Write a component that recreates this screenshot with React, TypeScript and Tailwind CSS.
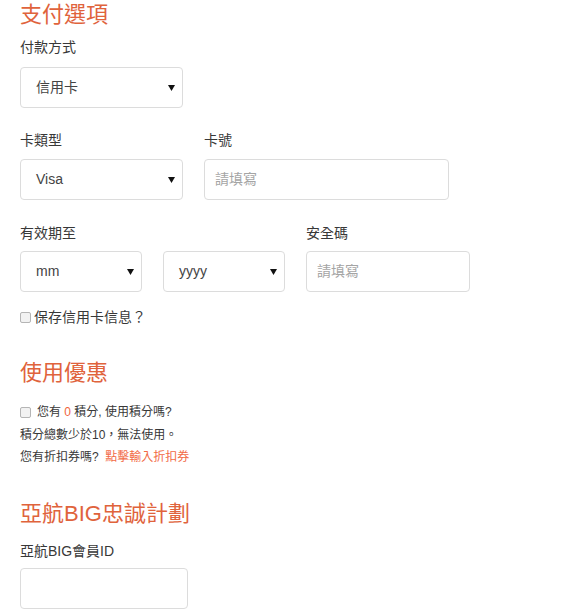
import React from "react"

const font = { fontFamily: '"Liberation Sans", "Noto Sans CJK TC", sans-serif' }

function Caret() {
    return (
        <svg width="7" height="6" viewBox="0 0 7 6" className="shrink-0">
            <polygon points="0,0 7,0 3.5,6" fill="#111" />
        </svg>
    )
}

function FakeSelect({ value, width }: { value: string; width: string }) {
    return (
        <div
            className={`${width} h-[41px] flex items-center justify-between pl-[15px] pr-[7px] border border-[#dcdcdc] rounded-[4px] bg-white text-[14px] text-[#444]`}
        >
            <span>{value}</span>
            <Caret />
        </div>
    )
}

function TextBox({ placeholder, width }: { placeholder?: string; width: string }) {
    return (
        <div
            className={`${width} h-[41px] flex items-center pl-[10px] border border-[#dcdcdc] rounded-[4px] bg-white text-[14px] text-[#a5a5a5]`}
        >
            {placeholder}
        </div>
    )
}

function Box() {
    return <span className="inline-block w-[11px] h-[11px] border border-[#b5b5b5] rounded-[2px] bg-[#f2f2f2] shrink-0" />
}

export default function App() {
    return (
        <div className="w-[586px] h-[614px] bg-white px-5 text-[#383838] overflow-hidden" style={font}>
            <h2 className="text-[22px] leading-[28px] text-[#e0633c] mt-[1px]">支付選項</h2>
            <div className="text-[14px] leading-[20px] mt-[8px]">付款方式</div>
            <div className="mt-[10px]">
                <FakeSelect value="信用卡" width="w-[163px]" />
            </div>

            <div className="flex gap-[21px] mt-[22px]">
                <div>
                    <div className="text-[14px] leading-[20px]">卡類型</div>
                    <div className="mt-[9px]">
                        <FakeSelect value="Visa" width="w-[163px]" />
                    </div>
                </div>
                <div>
                    <div className="text-[14px] leading-[20px]">卡號</div>
                    <div className="mt-[9px]">
                        <TextBox placeholder="請填寫" width="w-[245px]" />
                    </div>
                </div>
            </div>

            <div className="flex gap-[21px] mt-[23px]">
                <div>
                    <div className="text-[14px] leading-[20px]">有效期至</div>
                    <div className="mt-[8px] flex gap-[21px]">
                        <FakeSelect value="mm" width="w-[122px]" />
                        <FakeSelect value="yyyy" width="w-[122px]" />
                    </div>
                </div>
                <div>
                    <div className="text-[14px] leading-[20px]">安全碼</div>
                    <div className="mt-[8px]">
                        <TextBox placeholder="請填寫" width="w-[164px]" />
                    </div>
                </div>
            </div>

            <div className="flex items-center gap-[3px] mt-[15px] text-[14px] leading-[20px]">
                <Box />
                <span>保存信用卡信息？</span>
            </div>

            <h2 className="text-[22px] leading-[28px] text-[#e0633c] mt-[32px]">使用優惠</h2>
            <div className="mt-[14px] text-[12px] leading-[22px]">
                <div className="flex items-center gap-[6px]">
                    <Box />
                    <span>
                        您有 <span className="text-[#f0643c]">0</span> 積分, 使用積分嗎?
                    </span>
                </div>
                <div className="mt-[1px]">積分總數少於10，無法使用。</div>
                <div>
                    您有折扣券嗎?&nbsp; <span className="text-[#f26a45]">點擊輸入折扣券</span>
                </div>
            </div>

            <h2 className="text-[22px] leading-[28px] text-[#e0633c] mt-[32px]">亞航BIG忠誠計劃</h2>
            <div className="text-[14px] leading-[20px] mt-[13px]">亞航BIG會員ID</div>
            <div className="mt-[7px]">
                <TextBox width="w-[168px]" />
            </div>
        </div>
    )
}
